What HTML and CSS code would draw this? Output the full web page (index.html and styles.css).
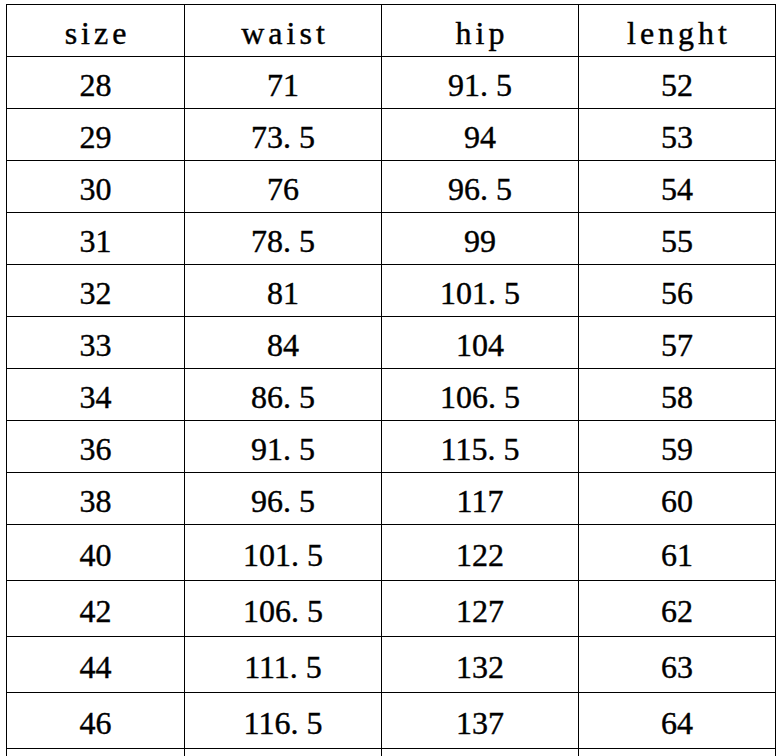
FILE: index.html
```html
<!DOCTYPE html>
<html>
<head>
<meta charset="utf-8">
<link rel="stylesheet" href="styles.css">
</head>
<body>
<div class="sheet">
  <div class="grid">
    <div class="cell head">size</div><div class="cell head">waist</div><div class="cell head">hip</div><div class="cell head">lenght</div>
    <div class="cell">28</div><div class="cell">71</div><div class="cell">91<span class="dot">.</span>5</div><div class="cell">52</div>
    <div class="cell">29</div><div class="cell">73<span class="dot">.</span>5</div><div class="cell">94</div><div class="cell">53</div>
    <div class="cell">30</div><div class="cell">76</div><div class="cell">96<span class="dot">.</span>5</div><div class="cell">54</div>
    <div class="cell">31</div><div class="cell">78<span class="dot">.</span>5</div><div class="cell">99</div><div class="cell">55</div>
    <div class="cell">32</div><div class="cell">81</div><div class="cell">101<span class="dot">.</span>5</div><div class="cell">56</div>
    <div class="cell">33</div><div class="cell">84</div><div class="cell">104</div><div class="cell">57</div>
    <div class="cell">34</div><div class="cell">86<span class="dot">.</span>5</div><div class="cell">106<span class="dot">.</span>5</div><div class="cell">58</div>
    <div class="cell">36</div><div class="cell">91<span class="dot">.</span>5</div><div class="cell">115<span class="dot">.</span>5</div><div class="cell">59</div>
    <div class="cell">38</div><div class="cell">96<span class="dot">.</span>5</div><div class="cell">117</div><div class="cell">60</div>
    <div class="cell">40</div><div class="cell">101<span class="dot">.</span>5</div><div class="cell">122</div><div class="cell">61</div>
    <div class="cell">42</div><div class="cell">106<span class="dot">.</span>5</div><div class="cell">127</div><div class="cell">62</div>
    <div class="cell">44</div><div class="cell">111<span class="dot">.</span>5</div><div class="cell">132</div><div class="cell">63</div>
    <div class="cell">46</div><div class="cell">116<span class="dot">.</span>5</div><div class="cell">137</div><div class="cell">64</div>
    <div class="cell"></div><div class="cell"></div><div class="cell"></div><div class="cell"></div>
  </div>
</div>
</body>
</html>
```

FILE: styles.css
```css
html, body {
  margin: 0;
  padding: 0;
  background: #ffffff;
}

.sheet {
  padding: 4px 0 0 6px;
  height: 756px;
  overflow: hidden;
  box-sizing: border-box;
}

.grid {
  display: inline-grid;
  grid-template-columns: 177px 196px 196px 196px;
  grid-template-rows: repeat(10, 51px) repeat(5, 55px);
  gap: 1px;
  padding: 1px;
  background: #000000;
}

.cell {
  background: #ffffff;
  display: flex;
  align-items: center;
  justify-content: center;
  padding-top: 5px;
  box-sizing: border-box;
  font-family: "Liberation Serif", "Times New Roman", serif;
  font-size: 32px;
  line-height: 1;
  color: #000000;
  -webkit-text-stroke: 0.4px #000000;
}

.head {
  letter-spacing: 4px;
  padding-left: 4px;
  padding-top: 4px;
}

.dot {
  margin-right: 8px;
}
```
